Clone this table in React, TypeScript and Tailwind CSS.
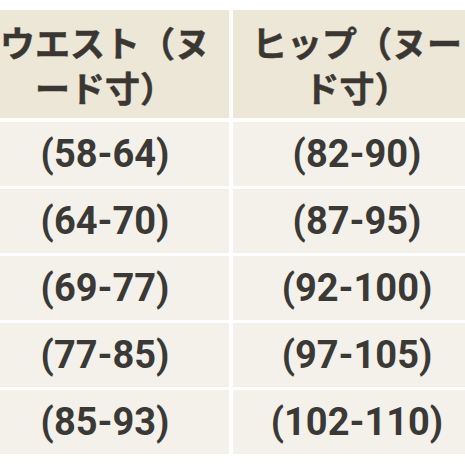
import { Fragment } from "react"

const rows: [string, string][] = [
  ["(58-64)", "(82-90)"],
  ["(64-70)", "(87-95)"],
  ["(69-77)", "(92-100)"],
  ["(77-85)", "(97-105)"],
  ["(85-93)", "(102-110)"],
]

const headCls =
  "h-[108px] mb-[1px] bg-[#ede7d7] flex items-center justify-center text-center text-[35px] leading-[45px] font-bold text-[#3a3733] [-webkit-text-stroke:0.5px_#3a3733]"
const cellCls =
  "h-[64px] bg-[#f4f1ea] flex items-center justify-center text-[38px] font-bold text-[#3b3936] font-['Roboto',sans-serif]"

export default function App() {
  return (
    <div className="w-[465px] h-[465px] overflow-hidden bg-white pt-[10px]">
      <div className="ml-[-19px] grid grid-cols-[248px_248px] gap-x-[4px] gap-y-[3px]">
        <div className={`${headCls} px-[10px]`} style={{ fontFamily: '"Noto Sans CJK JP", sans-serif' }}>
          ウエスト（ヌード寸）
        </div>
        <div className={`${headCls} px-[12px]`} style={{ fontFamily: '"Noto Sans CJK JP", sans-serif' }}>
          ヒップ（ヌード寸）
        </div>
        {rows.map(([waist, hip]) => (
          <Fragment key={waist}>
            <div className={cellCls}>{waist}</div>
            <div className={cellCls}>{hip}</div>
          </Fragment>
        ))}
      </div>
    </div>
  )
}
